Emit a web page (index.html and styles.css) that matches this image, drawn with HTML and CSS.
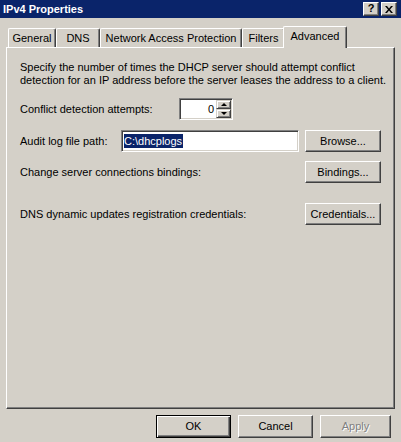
FILE: index.html
```html
<!DOCTYPE html>
<html>
<head>
<meta charset="utf-8">
<link rel="stylesheet" href="styles.css">
</head>
<body>
<div class="dialog">
  <div class="titlebar">
    <span class="title">IPv4 Properties</span>
    <div class="caption-btns">
      <span class="cap-btn help">?</span>
      <span class="cap-btn close">
        <svg width="8" height="7" viewBox="0 0 8 7"><path d="M0 0h2l2 2.5L6 0h2L5 3.5 8 7H6L4 4.5 2 7H0l3-3.5z" fill="#000"/></svg>
      </span>
    </div>
  </div>
  <div class="tabs">
    <div class="tab t-general">General</div>
    <div class="tab t-dns">DNS</div>
    <div class="tab t-nap">Network Access Protection</div>
    <div class="tab t-filters">Filters</div>
    <div class="tab t-adv active">Advanced</div>
  </div>
  <div class="panel">
    <p class="desc">Specify the number of times the DHCP server should attempt conflict<br>detection for an IP address before the server leases the address to a client.</p>
    <div class="row row-conflict">
      <span class="label label-conflict">Conflict detection attempts:</span>
      <div class="spinner">
        <span class="spin-val">0</span>
        <div class="spin-btns">
          <span class="spin-btn"><span class="arrow-up"></span></span>
          <span class="spin-btn"><span class="arrow-down"></span></span>
        </div>
      </div>
    </div>
    <div class="row row-audit">
      <span class="label label-audit">Audit log file path:</span>
      <div class="field"><span class="sel">C:\dhcplogs</span></div>
      <span class="btn btn-side">Browse...</span>
    </div>
    <div class="row row-bind">
      <span class="label label-grow">Change server connections bindings:</span>
      <span class="btn btn-side">Bindings...</span>
    </div>
    <div class="row row-cred">
      <span class="label label-grow">DNS dynamic updates registration credentials:</span>
      <span class="btn btn-side">Credentials...</span>
    </div>
  </div>
  <div class="footer">
    <span class="btn btn-foot default">OK</span>
    <span class="btn btn-foot">Cancel</span>
    <span class="btn btn-foot btn-apply disabled">Apply</span>
  </div>
</div>
</body>
</html>
```

FILE: styles.css
```css
html, body {
  margin: 0;
  padding: 0;
  background: #d4d0c8;
}

.dialog {
  width: 401px;
  height: 442px;
  background: #d4d0c8;
  font-family: "Liberation Sans", Arial, sans-serif;
  font-size: 11px;
  line-height: 13px;
  color: #000;
  overflow: hidden;
}

.titlebar {
  height: 18px;
  background: #0a246a;
  display: flex;
  align-items: flex-start;
  justify-content: space-between;
  padding: 0 4px 0 3px;
}

.title {
  color: #fff;
  font-weight: bold;
  line-height: 18px;
}

.caption-btns {
  display: flex;
  gap: 2px;
  margin-top: 2px;
}

.cap-btn {
  width: 16px;
  height: 14px;
  box-sizing: border-box;
  background: #d4d0c8;
  border: 1px solid;
  border-color: #fff #404040 #404040 #fff;
  box-shadow: inset -1px -1px #808080;
  display: flex;
  align-items: center;
  justify-content: center;
  font-weight: bold;
  font-size: 11px;
  line-height: 11px;
}

.help {
  padding-bottom: 1px;
}

.tabs {
  height: 29px;
  display: flex;
  align-items: flex-end;
  padding-left: 8px;
}

.tab {
  height: 19px;
  box-sizing: border-box;
  border-top: 1px solid #fff;
  border-left: 1px solid #fff;
  border-right: 1px solid #404040;
  border-radius: 2px 2px 0 0;
  box-shadow: inset -1px 0 #808080;
  display: flex;
  align-items: center;
  justify-content: center;
  padding-top: 1px;
  white-space: nowrap;
}

.t-general { width: 48px; }
.t-dns { width: 44px; }
.t-nap { width: 142px; }
.t-filters { width: 43px; }

.tab.active {
  width: 64px;
  height: 22px;
  margin: 0 -2px -1px -2px;
  position: relative;
  z-index: 1;
  background: #d4d0c8;
  align-items: flex-start;
  padding-top: 3px;
}

.panel {
  margin: 0 6px;
  height: 362px;
  box-sizing: border-box;
  border-top: 1px solid #fff;
  border-left: 1px solid #fff;
  border-right: 1px solid #404040;
  border-bottom: 1px solid #404040;
  box-shadow: inset -1px -1px #808080;
  padding: 13px 13px 0 13px;
}

.desc {
  margin: 0;
  white-space: nowrap;
}

.row {
  display: flex;
  align-items: center;
  height: 22px;
}

.row-conflict { margin-top: 11px; }
.row-audit { margin-top: 10px; }
.row-bind { margin-top: 9px; }
.row-cred { margin-top: 20px; }

.label {
  white-space: nowrap;
}

.label-conflict { width: 159px; }
.label-audit { width: 101px; }
.label-grow { flex: 1; }

.spinner {
  width: 54px;
  height: 22px;
  box-sizing: border-box;
  background: #fff;
  border: 1px solid;
  border-color: #808080 #fff #fff #808080;
  box-shadow: inset 1px 1px #404040, inset -1px -1px #d4d0c8;
  display: flex;
  justify-content: flex-end;
  align-items: stretch;
  padding: 1px;
}

.spin-val {
  align-self: center;
  padding-right: 2px;
}

.spin-btns {
  width: 15px;
  display: flex;
  flex-direction: column;
}

.spin-btn {
  flex: 1;
  box-sizing: border-box;
  background: #d4d0c8;
  border: 1px solid;
  border-color: #d4d0c8 #404040 #404040 #d4d0c8;
  box-shadow: inset 1px 1px #fff, inset -1px -1px #808080;
  display: flex;
  align-items: center;
  justify-content: center;
}

.arrow-up {
  width: 0;
  height: 0;
  border-left: 3px solid transparent;
  border-right: 3px solid transparent;
  border-bottom: 3px solid #000;
}

.arrow-down {
  width: 0;
  height: 0;
  border-left: 3px solid transparent;
  border-right: 3px solid transparent;
  border-top: 3px solid #000;
}

.field {
  width: 178px;
  height: 22px;
  box-sizing: border-box;
  background: #fff;
  border: 1px solid;
  border-color: #808080 #fff #fff #808080;
  box-shadow: inset 1px 1px #404040, inset -1px -1px #d4d0c8;
  display: flex;
  align-items: center;
  padding-left: 2px;
}

.sel {
  background: #0a246a;
  color: #fff;
  line-height: 14px;
  padding-right: 1px;
}

.btn {
  box-sizing: border-box;
  height: 22px;
  background: #d4d0c8;
  border: 1px solid;
  border-color: #fff #404040 #404040 #fff;
  box-shadow: inset -1px -1px #808080;
  display: flex;
  align-items: center;
  justify-content: center;
  white-space: nowrap;
}

.btn-side {
  width: 76px;
  margin-left: 6px;
}

.footer {
  display: flex;
  justify-content: flex-end;
  gap: 7px;
  padding: 6px 10px 0 0;
}

.btn-foot {
  width: 75px;
  height: 23px;
}

.btn-foot.default {
  border-color: #000;
  box-shadow: inset 1px 1px #fff, inset -1px -1px #404040, inset -2px -2px #808080;
}

.btn-apply {
  width: 71px;
}

.disabled {
  color: #808080;
  text-shadow: 1px 1px #fff;
}
```
